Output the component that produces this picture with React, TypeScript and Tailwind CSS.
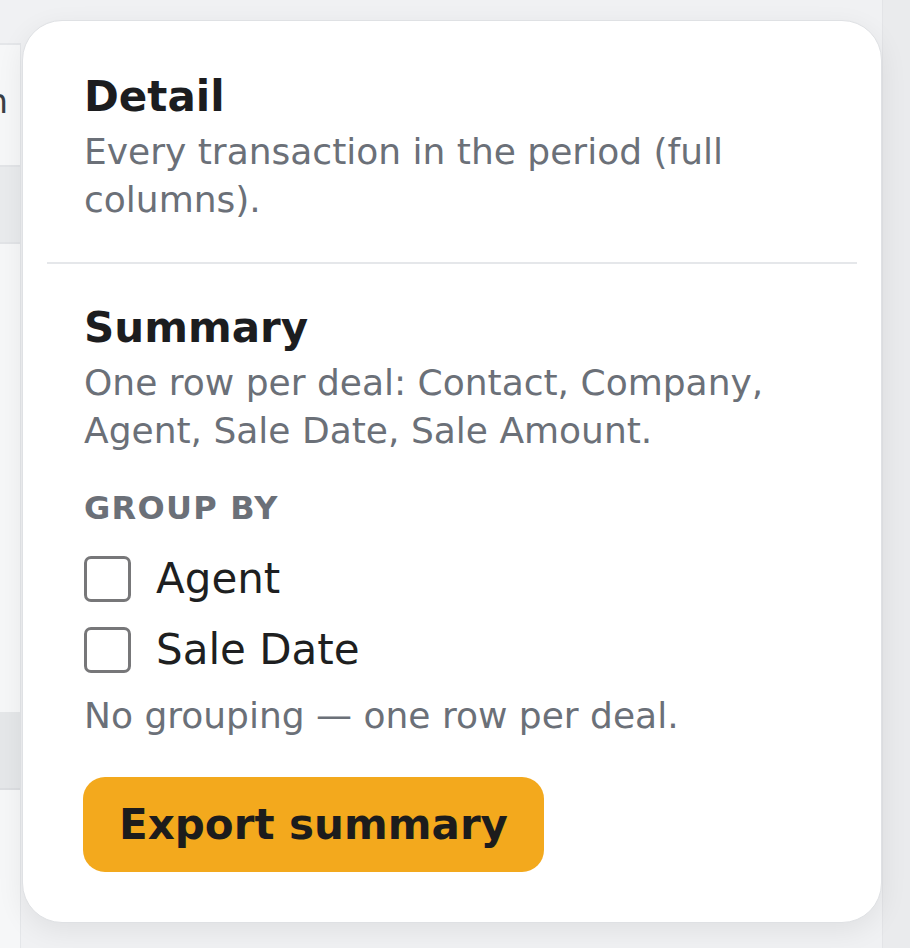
import { useState } from 'react';

const groupOptions = ['Agent', 'Sale Date'];

function GroupCheckbox({ label, checked, onToggle }: { label: string; checked: boolean; onToggle: () => void }) {
  return (
    <label className="flex h-[49px] cursor-pointer items-center gap-[25px]">
      <span
        onClick={onToggle}
        className={`flex h-[46px] w-[47px] shrink-0 items-center justify-center rounded-[7px] border-[3px] border-[#777779] ${checked ? 'bg-[#f3a91d]' : 'bg-white'}`}
      />
      <span className="text-[42px] leading-[49px] text-[#1e1f21]">{label}</span>
    </label>
  );
}

export default function App() {
  const [groups, setGroups] = useState<string[]>([]);

  const toggle = (g: string) =>
    setGroups(prev => (prev.includes(g) ? prev.filter(x => x !== g) : [...prev, g]));

  return (
    <div
      className="relative h-[948px] w-[910px] overflow-hidden bg-[#f0f1f3]"
      style={{ fontFamily: '"DejaVu Sans", "Noto Sans", sans-serif' }}
    >
      {/* page behind the popover */}
      <div className="flex h-full">
        <div className="mt-[43px] flex w-[21px] flex-col border-t-2 border-r border-[#e4e6e9] bg-[#f6f7f8]">
          <div className="flex h-[120px] items-center justify-end overflow-hidden pb-[8px]">
            <span className="mr-[12px] whitespace-nowrap text-[34px] text-[#3b3f46]">Column</span>
          </div>
          <div className="h-[79px] border-y-2 border-[#e2e4e7] bg-[#e9ebed]" />
          <div className="h-[468px]" />
          <div className="h-[78px] border-b-2 border-[#dcdee1] bg-[#e5e7e9]" />
        </div>
        <div className="flex-1" />
        <div className="w-[28px] border-l border-[#e3e4e7] bg-[#eaebed]" />
      </div>

      {/* export popover */}
      <div className="absolute left-[22px] top-[20px] w-[860px] rounded-[40px] border border-[#dfe1e4] bg-white px-[24px] shadow-[0_8px_28px_rgba(0,0,0,0.07)]">
        <div className="px-[37px] pb-[38px] pt-[51px]">
          <h3 className="text-[42px] font-bold leading-[49px] text-[#1c1d1f]">Detail</h3>
          <p className="mt-[7px] text-[36px] leading-[48px] text-[#6b7078]">
            Every transaction in the period (full columns).
          </p>
        </div>

        <div className="h-[2px] bg-[#e5e7ea]" />

        <div className="px-[37px] pb-[50px] pt-[39px]">
          <h3 className="text-[42px] font-bold leading-[49px] text-[#1c1d1f]">Summary</h3>
          <p className="mt-[7px] text-[36px] leading-[48px] text-[#6b7078]">
            One row per deal: Contact, Company, Agent, Sale Date, Sale Amount.
          </p>

          <div className="mt-[33px] text-[32px] font-bold uppercase leading-[40px] tracking-[0.04em] text-[#6b7078]">
            Group by
          </div>

          <div className="mt-[26px] flex flex-col gap-[22px]">
            {groupOptions.map(g => (
              <GroupCheckbox key={g} label={g} checked={groups.includes(g)} onToggle={() => toggle(g)} />
            ))}
          </div>

          <p className="mt-[18px] text-[36px] leading-[48px] text-[#6b7078]">
            {groups.length === 0 ? 'No grouping — one row per deal.' : `Grouped by ${groups.join(', ')}.`}
          </p>

          <button className="-ml-px mt-[37px] flex h-[95px] items-center rounded-[22px] bg-[#f3a91d] px-[36px] text-[42px] font-bold leading-[49px] text-[#1c1c1c]">
            Export summary
          </button>
        </div>
      </div>
    </div>
  );
}
